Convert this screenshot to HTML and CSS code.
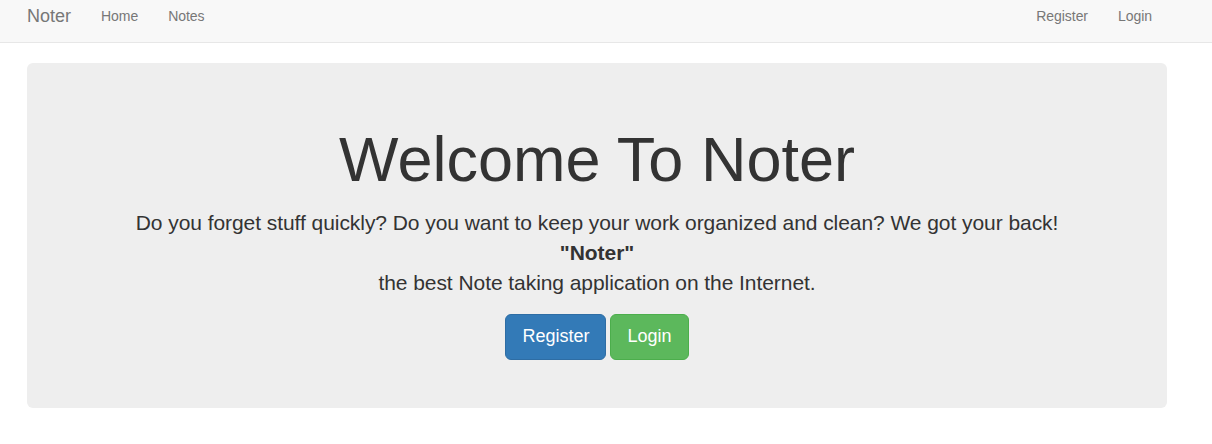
FILE: index.html
```html
<!DOCTYPE html>
<html lang="en">
<head>
<meta charset="utf-8">
<title>Noter</title>
<link rel="stylesheet" href="styles.css">
</head>
<body>
<nav class="navbar">
  <div class="nav-left">
    <a class="brand" href="#">Noter</a>
    <a class="nav-link" href="#">Home</a>
    <a class="nav-link" href="#">Notes</a>
  </div>
  <div class="nav-right">
    <a class="nav-link" href="#">Register</a>
    <a class="nav-link" href="#">Login</a>
  </div>
</nav>
<main class="jumbotron">
  <h1 class="title">Welcome To Noter</h1>
  <p class="lead">Do you forget stuff quickly? Do you want to keep your work organized and clean? We got your back!<br><strong>"Noter"</strong><br>the best Note taking application on the Internet.</p>
  <div class="actions">
    <a class="btn btn-primary" href="#">Register</a>
    <a class="btn btn-success" href="#">Login</a>
  </div>
</main>
</body>
</html>
```

FILE: styles.css
```css
* { box-sizing: border-box; }
html, body {
  margin: 0;
  padding: 0;
  background: #fff;
  font-family: "Liberation Sans", Arial, Helvetica, sans-serif;
  color: #333;
  font-size: 14px;
}
a { text-decoration: none; }

.navbar {
  display: flex;
  justify-content: space-between;
  height: 43px;
  background: #f8f8f8;
  border-bottom: 1px solid #e7e7e7;
  padding: 0 45px 0 12px;
}
.nav-left, .nav-right {
  display: flex;
  align-items: flex-start;
}
.brand {
  display: block;
  padding: 6px 15px 0;
  font-size: 18px;
  line-height: 20px;
  color: #777;
}
.nav-link {
  display: block;
  padding: 6px 15px 0;
  font-size: 14px;
  line-height: 20px;
  color: #777;
  letter-spacing: -0.05px;
}

.jumbotron {
  margin: 20px 45px 0 27px;
  background: #eee;
  border-radius: 6px;
  padding: 48px 60px;
  text-align: center;
}
.title {
  margin: 14px 0 14px;
  font-size: 63px;
  line-height: 1.1;
  font-weight: 500;
  color: #333;
}
.lead {
  margin: 0 0 16px;
  font-size: 21px;
  line-height: 30px;
  font-weight: 200;
  color: #333;
  letter-spacing: -0.06px;
}
.lead strong { font-weight: 700; }

.actions {
  display: flex;
  justify-content: center;
  gap: 4px;
}
.btn {
  display: inline-block;
  padding: 9px 16px 11px;
  font-size: 18px;
  line-height: 24px;
  border: 1px solid transparent;
  border-radius: 6px;
  color: #fff;
}
.btn-primary {
  background: #337ab7;
  border-color: #2e6da4;
}
.btn-success {
  background: #5cb85c;
  border-color: #4cae4c;
}
```
